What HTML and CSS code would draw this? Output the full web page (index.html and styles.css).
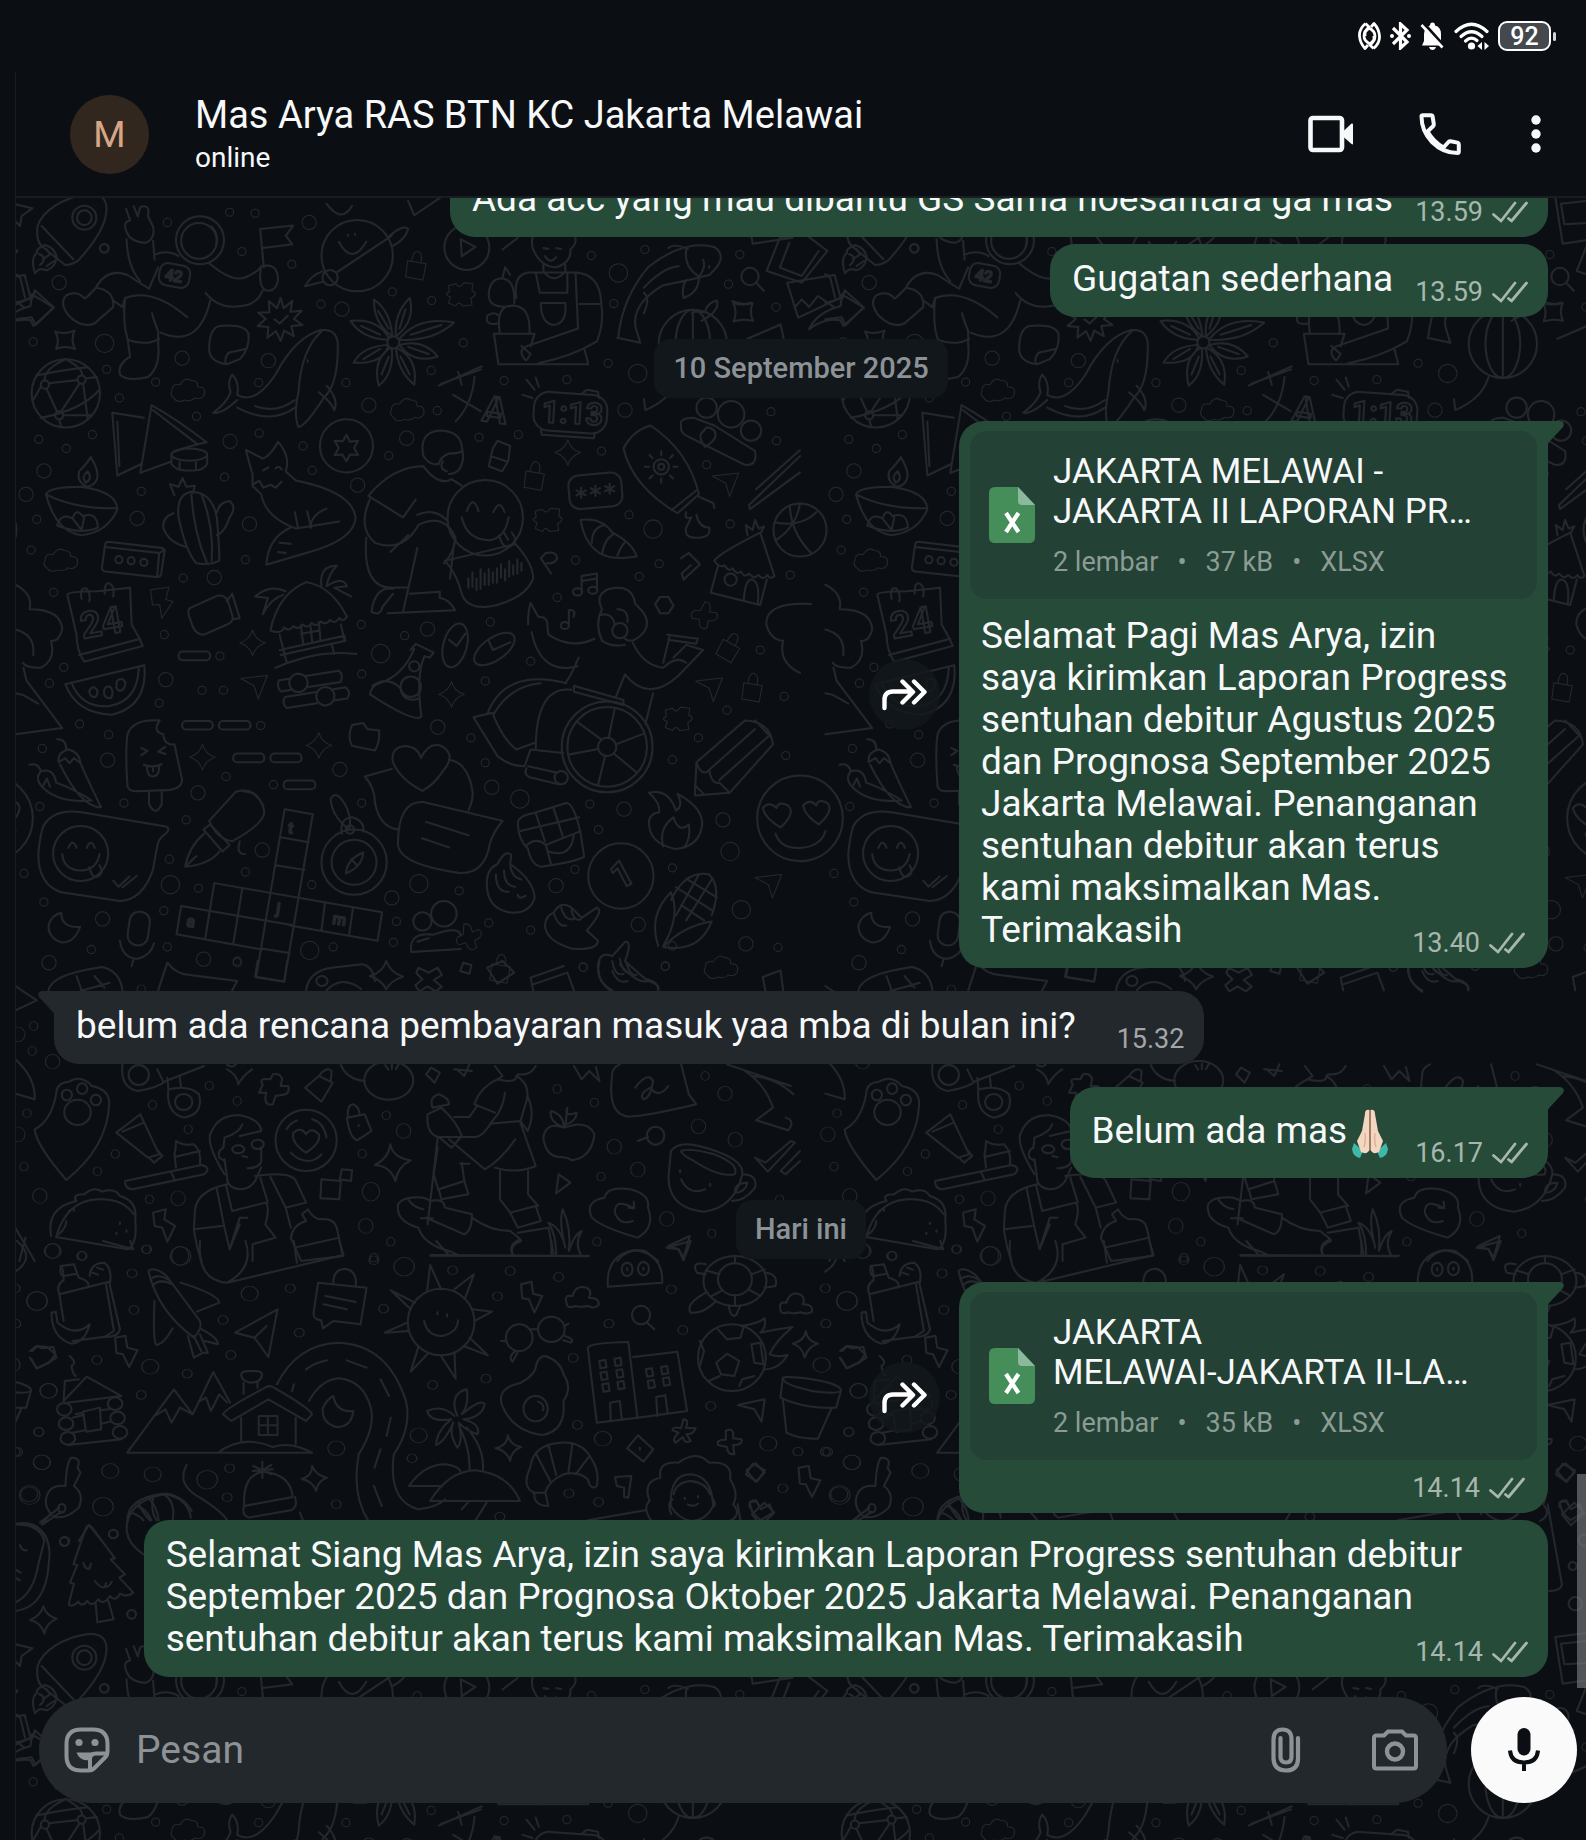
FILE: index.html
```html
<!DOCTYPE html>
<html lang="id">
<head>
<meta charset="utf-8">
<meta name="viewport" content="width=device-width, initial-scale=1">
<title>Mas Arya RAS BTN KC Jakarta Melawai</title>
<link rel="stylesheet" href="styles.css">
</head>
<body>
<svg class="sprite" aria-hidden="true">
  <defs>
    <symbol id="ticks" viewBox="0 0 36 22"><path d="M1.500 13.500 9 20 23 2M16.500 17.500 19.500 20 34.500 2" fill="none" stroke="currentColor" stroke-width="2.800" stroke-linecap="round" stroke-linejoin="round"/></symbol>
    <symbol id="tail" viewBox="0 0 16 23"><path d="M0 0H12Q17.500 1 15 6L3 19Q0 22 0 23Z" fill="currentColor"/></symbol>
    <symbol id="sheet" viewBox="0 0 46 56"><path d="M6 0H29L46 18V50Q46 56 40 56H6Q0 56 0 50V6Q0 0 6 0Z" fill="#458d59"/><path d="M29 0 46 18H33Q29 18 29 14Z" fill="#8cb99c"/><path d="M17 26 29.500 45M29.500 26 17 45" fill="none" stroke="#fff" stroke-width="4.200"/></symbol>
    <symbol id="forward" viewBox="0 0 46 32"><path d="M2.500 29V21Q2.500 12.500 11 12.500H30M20.500 2.500 31 13 20.500 23.500M32 2.500 42.500 13 32 23.500" fill="none" stroke="currentColor" stroke-width="4.400" stroke-linecap="round" stroke-linejoin="round"/></symbol>
  </defs>
</svg>

<div class="statusbar">
  <svg width="23" height="28" viewBox="0 0 23 28"><g fill="none" stroke="currentColor" stroke-width="2.800" stroke-linejoin="round"><path d="M7.500 1.500Q1 7 1.500 14T7 26.500L10 23"/><path d="M7.500 1.500 11 5Q6 9 6 14T12 22L16 18V14"/><path d="M15.500 26.500Q22 21 21.500 14T16 1.500L13 5"/><path d="M15.500 26.500 12 23Q17 19 17 14T11 6L7 10V14"/></g></svg>
  <svg width="21" height="28" viewBox="0 0 21 28"><path d="M3 6 17 20 10.500 26V2L17 8 3 22" fill="none" stroke="currentColor" stroke-width="3.200"/><circle cx="2" cy="14" r="2" fill="currentColor"/><circle cx="19" cy="14" r="2" fill="currentColor"/></svg>
  <svg width="25" height="28" viewBox="0 0 25 28"><path d="M2 23.500 4 19V12Q4.500 5 10 3.500 10 .5 12.500 .5T15 3.500Q21 5 21 12V19L23 23.500ZM9 25H16Q15 28 12.500 28T9 25Z" fill="currentColor"/><path d="M3.500 1 24 24" stroke="#0b0f13" stroke-width="3"/><path d="M1.500 3 22.500 25.500" stroke="currentColor" stroke-width="2.600"/></svg>
  <svg width="35" height="28" viewBox="0 0 35 28"><g fill="none" stroke="currentColor" stroke-width="3.200" stroke-linecap="round"><path d="M2 9.500Q17.500-5 33 9.500"/><path d="M7 14.500Q17.500 5 28 14.500"/><path d="M11.500 19Q17.500 13.500 23 18.500"/></g><circle cx="17.500" cy="24" r="3.600" fill="currentColor"/><path d="M28 20V28L23.500 24ZM30.500 20V28L35 24Z" fill="currentColor"/></svg>
  <span class="battery"><span class="battery-body">92</span><span class="battery-cap"></span></span>
</div>

<main class="app">
  <header class="topbar">
    <span class="avatar" aria-hidden="true">M</span>
    <div class="contact">
      <h1 class="contact-name">Mas Arya RAS BTN KC Jakarta Melawai</h1>
      <p class="contact-state">online</p>
    </div>
    <button class="icon-button" type="button" aria-label="Panggilan video"><svg width="46" height="38" viewBox="0 0 46 38"><rect x="2.500" y="3" width="31.500" height="32" rx="2.500" fill="none" stroke="currentColor" stroke-width="4.600"/><path d="M35 16.500 43.500 8.500Q45 8 45 9.500V28.500Q45 30 43.500 29L35 21.500Z" fill="currentColor"/></svg></button>
    <button class="icon-button" type="button" aria-label="Panggilan suara"><svg width="42" height="42" viewBox="0 0 42 42"><path d="M2.500 3.500Q2.500 2.200 4 2.200H12Q13.300 2.200 13.600 3.500L14.800 11Q15 12.300 14 13.300L8.500 18.500Q14.500 29 24.500 34.500L29.500 29Q30.500 28 31.800 28.300L38.500 29.600Q39.800 30 39.800 31.300V38.500Q39.800 40 38.300 40 24 40 13 29 2.500 18 2.500 3.500Z" fill="none" stroke="currentColor" stroke-width="4" stroke-linejoin="round"/></svg></button>
    <button class="icon-button" type="button" aria-label="Menu lainnya"><svg width="20" height="38" viewBox="-5 0 20 38"><g fill="currentColor"><circle cx="5" cy="5" r="4.700"/><circle cx="5" cy="19" r="4.700"/><circle cx="5" cy="33" r="4.700"/></g></svg></button>
  </header>

  <section class="chat" aria-label="Percakapan">
    <svg class="wallpaper" aria-hidden="true">
      <defs>
        <marker id="d1" class="mk" markerUnits="userSpaceOnUse" markerWidth="60" markerHeight="60" viewBox="-30 -30 60 60"><circle class="ink" r="8"/></marker>
        <marker id="d2" class="mk" markerUnits="userSpaceOnUse" markerWidth="60" markerHeight="60" viewBox="-30 -30 60 60"><circle class="ink" r="14"/></marker>
        <marker id="d3" class="mk" markerUnits="userSpaceOnUse" markerWidth="60" markerHeight="60" viewBox="-30 -30 60 60"><circle class="ink" r="18"/></marker>
        <marker id="e1" class="mk" markerUnits="userSpaceOnUse" markerWidth="80" markerHeight="80" viewBox="-40 -40 80 80"><ellipse class="ink" rx="8" ry="13"/></marker>
        <marker id="e2" class="mk" markerUnits="userSpaceOnUse" markerWidth="80" markerHeight="80" viewBox="-40 -40 80 80"><ellipse class="ink" rx="14" ry="22"/></marker>
        <marker id="e3" class="mk" markerUnits="userSpaceOnUse" markerWidth="80" markerHeight="80" viewBox="-40 -40 80 80"><ellipse class="ink" rx="17" ry="28"/></marker>
        <path id="cloud" d="M-30 0Q-30-15-14-12-5-28 8-20 22-20 20-8 38-8 33 8 28 18 15 14 8 22-5 18-20 25-25 15-35 8-30 0Z"/>
        <path id="spark" d="M0-25Q5-6 25 0 6 6 0 25-6 6-25 0-6-6 0-25Z"/>
        <path id="cross" d="M-9-24Q0-28 5-18L8-9 20-14Q30-8 22 2L12 8 16 20Q10 30 0 22L-5 12-18 16Q-28 10-20 0L-10-5Z"/>
        <path id="bolt" d="M-22-27 14-32 8-8 22-4 0 29-4 2-18 3Z"/>
        <path id="lock" d="M-16-8 20-2 14 30-20 24ZM-8-8Q-5-28 4-26 14-24 10-4"/>
        <path id="puzzle" d="M-26-14-12-18Q-4-6 4-20L22-18 20-4Q34 2 18 10L20 24 2 26Q-6 14-12 26L-26 20-22 8Q-36 4-24-2Z"/>
        <path id="dart" d="M-26-14 26-20 8 26 0 0Z"/>
        <g id="tile" class="ink">
          <g transform="translate(0 200) scale(.5102)">
            <circle cx="392" cy="77" r="47"/><circle cx="390" cy="78" r="35"/><path d="M415 50q14 15 9 35"/>
            <path d="M248 60Q240 40 255 38L247 15M262 10 270 30 275 12Q295 5 290 30L300 50Q305 75 285 82 255 80 248 60M248 75Q250 130 275 157M300 78 303 115M303 105Q330 95 350 108M410 122Q455 160 480 150 505 140 512 128M188 170Q210 130 250 145L292 172 310 130M188 170Q165 195 165 190 150 175 130 185 115 200 135 225 160 250 185 240L222 208Q225 175 188 170M512 128Q545 120 545 155 540 180 520 175 505 165 512 128M222 195 240 208 245 190Q300 170 367 228M245 190Q240 240 250 270L255 305Q230 320 235 340 250 355 290 345 315 325 310 280V255Q300 230 298 220M250 272Q285 285 312 270M315 258Q390 290 412 195M403 180Q430 215 480 205 505 200 515 175"/>
            <rect x="312" y="124" width="60" height="44" rx="16" transform="rotate(10 342 146)"/><text x="324" y="157" class="glyph-s" transform="rotate(10 342 146)">42</text>
            <path d="M517 130 510 55 575 48 560 68 573 85 515 92"/>
            <circle cx="700" cy="107" r="70"/><circle cx="647" cy="150" r="15"/><path d="M634 158 598 167Q610 145 632 138M762 70Q790 45 800 55 795 75 770 88M660 140 768 68M664 80Q690 128 718 80M682 66v2M696 64v2"/>
            <use href="#lock" x="815" y="125"/><circle cx="915" cy="91" r="44"/><path d="M903 75 932 90 905 108Z"/>
            <use href="#puzzle" x="905" y="180"/><use href="#puzzle" x="1075" y="622"/><use href="#puzzle" x="1330" y="1012"/>
            <path d="M30 232 62 228 70 243 105 208 68 175 64 190 30 200M108 256Q128 262 146 254 138 272 147 290 128 282 110 290 118 272 108 256M1437 200Q1456 206 1475 200 1468 218 1476 235 1456 230 1438 236 1446 218 1437 200"/>
            <path d="m550 190 6 20 17-14-4 21 22-2-15 16 17 12-22 2 5 20-19-11-7 20-9-19-17 13 2-21-21-2 16-14-15-12 22-1-1-22 16 14ZM538 232l10 8 16-15"/>
            <path d="M430 245Q480 240 487 260 490 290 470 310L445 320Q410 315 410 290 410 250 430 245M442 318Q440 295 460 295L480 290"/>
            <circle cx="771" cy="277" r="12"/><path d="M769 265Q732 240 733 193 765 215 769 265M776 265Q772 220 803 190 815 235 776 265M783 270Q820 225 890 238 850 275 783 272M783 282Q830 270 858 305 810 320 783 282M778 288Q820 310 812 360 780 335 776 288M768 289Q772 340 742 362 730 310 765 288M760 285Q750 320 693 317 710 285 760 282M760 272Q710 270 687 235 740 230 762 268M741 215 762 250M795 212 783 250M865 243 805 262M840 300 800 286M803 340 785 305M748 340 762 305M712 310 745 290M708 245 745 262"/>
            <path d="M418 415Q445 395 452 375 445 355 455 340 470 355 465 380 500 400 540 340 580 265 630 253 665 250 662 290 662 360 635 385 600 440 585 443 575 420 585 375 590 290 632 254M465 405Q530 440 578 405M418 415Q435 418 465 390M500 402Q540 418 578 390M625 375Q650 395 655 410 665 390 640 362M603 312v3"/>
            <circle cx="129" cy="377" r="67"/><circle cx="88" cy="360" r="8"/><circle cx="160" cy="350" r="8"/><circle cx="116" cy="420" r="8"/><path d="M72 342Q130 330 172 326M65 390 80 364M96 357 152 351M168 348 190 345M91 368 112 413M124 420 180 420M156 358 120 412M80 425Q160 410 195 370M129 310Q85 330 88 352M129 310Q165 330 160 342M163 358 172 428M116 428 120 443"/>
            <use href="#cloud" x="367" y="372"/><use href="#cloud" x="797" y="410"/><use href="#cloud" x="118" y="705"/><use href="#cloud" x="1412" y="1503"/>
            <path d="M282 425 220 415 230 538 278 515M230 432 234 520M275 533 297 400Q350 430 405 473 370 480 340 492M275 533 337 510M300 410 385 475M336 497V515Q345 530 371 528 400 530 406 515V497M352 512v12M384 512v12"/><ellipse cx="371" cy="497" rx="35" ry="12"/>
            <path d="M90 575Q95 560 160 560 230 570 230 605 210 650 160 655 110 650 90 575 150 605 230 602M170 560Q150 550 155 530 170 515 178 502 195 530 190 545 185 558 170 560M168 552Q158 540 172 530 182 545 168 552M112 636Q120 610 142 622 150 600 162 618 190 608 192 640 160 655 112 636M142 622 160 645 165 620"/>
            <path d="M385 710Q365 690 350 620 345 575 375 570 415 570 425 620 430 680 430 705 410 715 385 710M375 575Q380 650 405 708M395 575Q420 640 415 705M340 612Q318 620 320 640 330 670 365 678M425 610Q430 590 450 588 465 600 450 620 440 650 425 655M342 577 333 555 350 560 358 543 365 560 382 558 378 572"/>
            <path d="M212 668 318 680Q325 682 322 690L316 730Q315 738 306 737L206 726Q198 724 200 716L206 674Q207 668 212 668M206 678 312 690 308 736M312 690 322 684"/><circle cx="233" cy="703" r="7"/><circle cx="257" cy="705" r="7"/><circle cx="282" cy="708" r="7"/>
            <path d="M482 488 515 505Q530 500 545 472 570 500 560 530L580 548Q690 570 697 620 695 665 600 690L522 713Q525 660 570 640M482 488Q490 520 495 535L495 558 512 575Q520 620 580 642L665 628M497 555 508 548 516 562 530 556 540 562 552 550M516 528l10-6M540 524q6-6 12 2M578 610 584 640M602 608 610 640M640 603Q610 615 608 640M545 688 560 690M548 670 570 672"/>
            <circle cx="679" cy="480" r="52"/><path d="m679 458 7 14 16-2-8 14 8 14-16-1-7 13-8-13-15 1 8-14-8-14 16 1Z"/>
            <path d="M830 500Q820 455 860 450 900 450 905 480L908 500Q905 535 880 535M830 500Q842 520 860 515 865 500 880 495 900 495 905 490M868 510Q860 525 876 530M722 578Q770 520 830 520 860 560 885 545L905 558M722 578 790 620 815 585M725 585Q700 640 735 670 790 690 820 635 870 610 893 660 890 690 870 710M818 615Q850 600 875 625M718 660Q710 760 770 758L800 757M818 680 790 805M765 688 800 655M728 805Q735 755 770 760M728 805Q745 815 750 795L770 770M760 808 892 802Q880 780 862 778M803 770 862 766 862 778M890 670 882 740"/>
            <circle cx="951" cy="621" r="74"/><path d="M905 620Q915 665 960 665 990 660 997 620M915 608q12-35 23 0M967 610q12-28 22 0M978 655q8 28 22 22 18-8 3-27M988 650l8 14"/>
            <path d="M872 705Q960 685 1010 672 1045 710 1045 740 1030 780 960 795 915 800 905 770 895 730 872 705M918 740v18M926 728v28M934 740v22M942 722v38M950 730v22M958 722v30M966 728v20M974 720v28M982 712v26M990 722v22M998 706v30M1006 714v18M1014 702v28M1022 710v14"/>
            <use href="#lock" x="1047" y="537"/><use href="#lock" x="1430" y="872" transform="rotate(20 1430 872)"/><use href="#lock" x="1474" y="952"/><use href="#lock" x="980" y="1503"/>
            <use href="#spark" x="1113" y="493"/><use href="#spark" x="495" y="866"/><use href="#spark" x="397" y="1090"/><use href="#spark" x="625" y="1067"/><use href="#spark" x="885" y="967"/>
            <path d="M958 520 966 485 975 470 1000 480 996 510 984 530ZM962 500 992 510M865 358 943 330M860 362 944 324M898 335 905 360M930 345Q925 400 893 432M888 380 942 412M1032 350 1048 370M1050 346 1056 364M1024 380 1044 386"/><text x="948" y="434" class="glyph-l" transform="rotate(8 970 400)">A</text>
            <rect x="1046" y="377" width="144" height="76" rx="30" transform="rotate(4 1118 415)"/><path d="M1140 378 1150 370 1172 374 1174 386M1060 450 1062 458 1164 465 1166 455"/><text x="1062" y="436" class="glyph-m" transform="rotate(3 1118 415)">1:13</text>
            <path d="M1222 485Q1240 450 1275 440 1350 490 1370 575L1328 612Q1240 560 1222 485M1316 606 1364 568M1370 580 1398 592 1400 602M1345 610Q1340 625 1355 620L1345 640Q1340 660 1365 660 1395 660 1390 640 1370 640 1365 615"/><circle cx="1296" cy="521" r="15"/><circle cx="1296" cy="521" r="6"/><path d="M1296 498V490M1296 552V544M1320 521H1328M1264 521H1272M1313 504 1319 498M1313 538 1319 544M1279 504 1273 498M1279 538 1273 544"/>
            <circle cx="1385" cy="405" r="20"/><circle cx="1433" cy="418" r="26"/><circle cx="1472" cy="450" r="20"/><path d="M1335 440Q1330 425 1360 425L1400 440 1480 490Q1485 520 1460 517L1345 460Q1332 452 1335 440M1380 450Q1385 438 1400 450 1410 465 1382 482 1365 460 1380 450"/>
            <rect x="1115" y="535" width="104" height="66" rx="20" transform="rotate(-5 1167 568)"/><path d="M1139 562v20M1130 567l18 10M1148 567l-18 10M1167 558v20M1158 563l18 10M1176 563l-18 10M1195 554v20M1186 559l18 10M1204 559l-18 10"/>
            <use href="#dart" x="1422" y="553"/><use href="#dart" x="498" y="950"/><use href="#dart" x="1390" y="955"/><use href="#dart" x="1506" y="1340"/>
            <path d="M1138 625Q1180 620 1200 650 1240 670 1248 697 1200 705 1175 690 1145 670 1138 625M1160 670Q1160 640 1185 635M1180 692Q1185 660 1205 652M1210 695Q1215 680 1225 668M1568 488 1482 565M1568 532 1470 604 1468 596 1568 500"/>
            <path d="M1070 690 1060 700 1080 730M1070 690Q1090 685 1092 700 1088 712 1072 710M1350 690 1335 700M1350 690 1372 712 1340 742 1336 730 1354 714"/>
            <path d="M132 772Q132 765 190 765L255 758 258 830Q270 850 280 872L165 903Q150 880 150 850ZM155 890 275 858M160 780Q155 755 170 760 178 770 175 785M205 770Q205 745 215 750 225 755 222 775"/><text x="158" y="850" class="glyph-l" transform="rotate(-10 205 830)">24</text>
            <use href="#bolt" x="317" y="789"/><path d="M372 798 425 774Q440 770 447 785L456 815Q458 825 445 830L400 850Q385 850 378 835L370 812Q368 802 372 798M444 785 455 770 470 818 456 820"/>
            <path d="M530 842Q545 770 600 747 650 755 680 815q-8 12-15 2-8 14-18 4-8 12-18 3-8 12-18 3-8 12-18 3-8 12-18 3-8 12-18 3-5 14-27 6M548 850 562 905M668 830 675 860M548 880 675 852 677 862 550 890M590 832 594 868M608 830 612 864M625 825 628 860M590 848 627 842M630 755Q625 715 660 715 645 730 640 755M500 775Q530 750 560 765M500 775 525 778 515 810Q530 780 555 772M640 755Q672 735 680 755L655 758 688 775M540 915Q560 905 580 900 640 880 698 888M650 868 655 888"/>
            <rect x="350" y="883" width="62" height="17" rx="8"/><rect x="357" y="1019" width="60" height="17" rx="8"/><rect x="429" y="1019" width="62" height="17" rx="8"/><rect x="457" y="1083" width="61" height="17" rx="8"/><rect x="530" y="1083" width="61" height="17" rx="8"/><rect x="556" y="1136" width="62" height="17" rx="8"/>
            <g transform="rotate(-9 610 975)"><path d="M572 952H553Q546 940 553 930H574M608 952H672Q680 940 672 930H606M620 986H560Q550 975 560 964H622M656 986H680Q690 975 680 964H654"/><circle cx="590" cy="941" r="18"/><circle cx="638" cy="975" r="18"/></g>
            <path d="M128 947 283 910Q290 990 220 1007 150 1005 128 947M140 944Q160 995 215 990 270 980 272 915M175 960q8-14 16 0 0 14-8 12-8-2-8-12M204 966q-2-16 12-14 8 8 2 22-12 2-14-8M230 940q10-8 16 4-2 16-12 16-10-4-4-20"/>
            <path d="M250 1148Q245 1080 250 1045 260 1015 313 1018 298 1040 320 1045 322 1068 342 1065L357 1135Q355 1155 320 1155L265 1157Q250 1155 250 1145M292 1158V1182Q305 1208 317 1182V1155M277 1072l12 6-12 8M324 1070l-14 9 14 5M282 1105Q300 1112 317 1104M288 1108q0 20 12 20 12 0 12-22M300 1110v8"/>
            <path d="M58 1105Q75 1100 80 1118 65 1135 90 1155 120 1180 180 1175M80 1118Q105 1110 110 1140 140 1150 180 1175M115 1100Q112 1080 135 1075 155 1080 158 1102 165 1120 198 1188 160 1190 118 1105M115 1100 128 1092 136 1102 145 1092 158 1102M112 1055Q130 1055 130 1075M85 1145 92 1132 98 1148"/>
            <path d="M85 1225Q105 1190 160 1198L325 1226Q335 1230 325 1240 310 1250 308 1265L300 1310Q280 1370 235 1372L120 1355Q75 1340 75 1280 78 1245 85 1225M222 1332l10 12 22-20M240 1345l28-22"/><circle cx="158" cy="1279" r="54"/><path d="M122 1280Q125 1312 160 1312 190 1310 195 1280M134 1268q8-20 16 0M170 1268q8-20 16 0M175 1306q5 22 16 18 14-6 4-22"/>
            <path d="M410 1215 462 1158Q505 1145 518 1195 520 1220 455 1255 425 1250 410 1215M399 1232 412 1222 450 1262 436 1275ZM400 1240Q370 1265 363 1305 410 1300 430 1275M363 1305 385 1284M480 1158Q500 1155 516 1185M470 1255Q462 1280 480 1280"/>
            <path d="M558 1192 613 1202 557 1530 502 1521ZM420 1337 749 1394 740 1450 569 1420M355 1382 577 1420M355 1382 346 1437 513 1467M420 1337 402 1447M475 1347 457 1457M637 1375 630 1430M692 1384 684 1440M550 1247 605 1257M540 1302 597 1311M512 1465 568 1474"/><g class="glyph-s" transform="rotate(9 550 1400)"><text x="538" y="1238">t</text><text x="540" y="1398">j</text><text x="370" y="1450">a</text><text x="652" y="1400">m</text></g>
            <circle cx="694" cy="1296" r="64"/><circle cx="694" cy="1296" r="44"/><path d="M678 1318Q680 1290 712 1277 710 1305 678 1318M688 1290l12 12M670 1240Q665 1210 690 1208 715 1215 712 1236M684 1232Q650 1205 648 1172 660 1150 680 1190 690 1215 684 1232"/><circle cx="686" cy="1232" r="8"/>
            <path d="M825 1092Q840 1060 865 1068 895 1085 870 1115 850 1145 828 1156 785 1135 770 1100 765 1070 795 1068 820 1070 825 1092M768 1113 715 1128Q735 1150 735 1180 745 1230 783 1232M880 1095Q915 1100 925 1150 930 1170 918 1195M780 1260Q780 1175 830 1178L985 1215Q965 1240 960 1260 950 1320 900 1317 780 1300 780 1260M835 1217 918 1243M827 1249 880 1267"/>
            <path d="M690 1027 712 1023 720 1035 743 1038Q745 1060 735 1077L690 1068Q680 1050 690 1027M805 880 815 868 850 885 842 895 832 892Q815 930 826 1010 815 1025 725 967 728 950 745 945 790 930 812 878M730 950Q760 930 785 955 790 985 822 975"/><circle cx="805" cy="952" r="20"/><circle cx="812" cy="912" r="10"/>
            <ellipse cx="892" cy="871" rx="23" ry="44" transform="rotate(15 892 871)"/><ellipse cx="969" cy="878" rx="22" ry="46" transform="rotate(55 969 878)"/><path d="M880 860 895 872 912 848M958 862 966 880 1000 865"/>
            <path d="M1180 800Q1165 770 1195 760 1240 750 1245 790 1280 820 1262 845 1240 870 1225 858M1180 800Q1165 830 1180 862 1200 875 1225 870M1175 812Q1200 805 1205 830M1210 800Q1232 800 1230 825"/><circle cx="1215" cy="842" r="15"/>
            <path d="M1035 830Q1035 800 1040 788L1055 815Q1075 815 1073 835L1075 850Q1120 880 1165 858M1042 845Q1060 930 1132 912M1134 895Q1120 930 1108 945M1240 865Q1260 910 1300 915 1325 890 1345 905M1125 950 1222 978 1222 988 1125 962ZM1225 928 1207 972M1225 928Q1270 985 1330 930L1378 880 1345 870 1320 895M1308 850 1368 858 1364 868 1310 860M1312 855 1300 905M1280 965 1265 1025"/>
            <circle cx="1190" cy="1070" r="89"/><circle cx="1190" cy="1070" r="78"/><circle cx="1190" cy="1070" r="18"/><path d="M1178 1055 1130 1020M1193 1052 1205 994M1207 1065 1262 1044M1203 1083 1248 1120M1186 1088 1172 1145M1173 1074 1115 1085M955 1005Q990 915 1110 945M968 1005Q1000 950 1060 945M1050 1075Q1050 950 1120 958M928 1012 965 1003Q985 1055 1012 1075L1048 1062M928 1012 975 1088Q1000 1108 1028 1108L1040 1075 1103 1082M1032 1112Q1025 1125 1040 1130L1095 1143M1035 1108 1090 1120"/><circle cx="1100" cy="1130" r="13"/>
            <path d="M1140 765V735L1170 730V762M1140 745 1170 740M1115 830V802Q1130 800 1124 815"/><ellipse cx="1132" cy="766" rx="9" ry="7"/><ellipse cx="1162" cy="763" rx="9" ry="7"/><ellipse cx="1107" cy="832" rx="8" ry="7"/>
            <path d="M1284 790 1294 776H1310L1320 793 1310 808H1294Z"/><use href="#cross" x="1380" y="811" transform="rotate(25 1380 811)"/>
            <path d="M1400 705Q1410 690 1490 650L1518 735q-8 8-14-2-8 12-18 0-8 10-18-3-8 10-16-4-8 8-16-6-8 8-16-6-10 6-20-9M1407 716 1393 768 1490 792 1503 742M1458 782Q1460 740 1475 742 1490 748 1485 790M1465 655 1462 635 1475 645 1480 625 1487 642 1498 638 1490 652"/><circle cx="1432" cy="742" r="12"/>
            <circle cx="1568" cy="645" r="52"/><path d="M1520 630Q1570 640 1600 610M1548 597Q1550 650 1590 690M1520 665Q1560 640 1568 593"/>
            <path d="M30 752Q65 770 58 800 120 800 122 840 115 865 100 862 110 900 80 915 50 915 45 905M30 840Q70 850 65 890M46 915 52 940 122 1033 30 1045M30 965 45 968 75 985M1590 790Q1500 785 1502 830 1510 860 1535 862 1525 905 1568 925"/>
            <path d="M1362 1165 1365 1100 1460 1018Q1510 1020 1515 1065L1430 1160ZM1365 1100Q1375 1130 1390 1115 1395 1145 1410 1140 1420 1150 1430 1160M1390 1115 1480 1035M1410 1135 1505 1050M1480 1018 1512 1052M1362 1145 1380 1163"/>
            <path d="M1015 1220Q1015 1205 1045 1200L1110 1180Q1125 1180 1138 1240L1145 1285Q1130 1295 1060 1305 1040 1300 1035 1270 1015 1250 1015 1220M1050 1200 1068 1255M1085 1190 1103 1245M1020 1235 1135 1208M1030 1265Q1050 1245 1070 1262L1138 1235M1070 1262 1080 1300M1075 1275Q1120 1290 1125 1240"/>
            <path d="M1272 1160Q1310 1150 1325 1195 1340 1185 1328 1162 1380 1190 1376 1225 1370 1265 1325 1270 1270 1260 1272 1215 1275 1200 1292 1198 1295 1180 1272 1160M1300 1265Q1290 1230 1320 1208 1330 1240 1350 1222 1355 1250 1340 1268"/>
            <circle cx="1217" cy="1323" r="64"/><text x="1200" y="1346" class="glyph-l" transform="rotate(-28 1217 1323)">1</text>
            <path d="M955 1350Q950 1310 975 1300 990 1270 1002 1282L1000 1300Q1045 1330 1048 1365 1040 1395 1005 1395 960 1390 955 1350M972 1320q0 35 25 34M988 1312q0 30 22 32M1000 1305q5 22 22 25M1015 1360Q1015 1370 1030 1362"/>
            <path d="M1068 1420Q1070 1400 1085 1395 1100 1370 1120 1385L1140 1405 1170 1385Q1185 1390 1150 1430L1172 1450Q1170 1470 1120 1465 1070 1450 1068 1420M1085 1395q10 30 25 25M1100 1385q8 28 25 22M1120 1390q5 22 18 18M1172 1498Q1175 1470 1200 1480L1225 1452Q1240 1450 1225 1490L1265 1525Q1290 1530 1290 1545M1172 1498Q1170 1530 1200 1550M1200 1490q5 30 22 25M1215 1485q5 30 22 28M1228 1495q8 25 20 22"/>
            <path d="M1290 1460Q1270 1400 1315 1355 1335 1400 1300 1460M1315 1370Q1345 1310 1390 1320 1415 1345 1395 1400M1395 1412Q1340 1420 1300 1462 1370 1475 1395 1412M1325 1345 1395 1390M1345 1328 1405 1365M1370 1320 1325 1400M1395 1330 1345 1410M1335 1380 1380 1410"/>
            <circle cx="1568" cy="1210" r="84"/><path d="M1522 1190Q1525 1175 1545 1185 1560 1200 1530 1228 1500 1210 1495 1190 1508 1175 1522 1190M1600 1185Q1603 1170 1622 1180 1635 1195 1605 1222 1578 1205 1574 1185 1588 1170 1600 1185M1520 1240Q1530 1270 1568 1268 1610 1265 1618 1235"/>
            <circle cx="870" cy="1397" r="25"/><circle cx="828" cy="1412" r="18"/><path d="M806 1472Q800 1432 850 1438 900 1420 903 1440M806 1472 903 1466M818 1452 840 1445"/><use href="#cross" x="918" y="1442"/>
            <path d="M120 1395Q120 1425 157 1423 145 1455 120 1453 95 1445 95 1420 100 1400 120 1395M235 1450Q240 1485 270 1485 295 1480 302 1455M262 1485 258 1500"/><rect x="252" y="1393" width="40" height="66" rx="19" transform="rotate(8 272 1426)"/>
            <path d="M1045 95Q1060 130 1090 130 1120 120 1118 95 1130 85 1128 72M1045 95Q1040 80 1045 68M1065 125V138Q1085 165 1108 138V125M1065 92l10 2M1090 92l10 2M1068 108Q1078 125 1090 110M1012 190Q1005 145 1035 140H1130Q1175 145 1178 195 1185 240 1170 275 1120 305 1055 318M1030 312Q1010 290 1040 282L1133 250 1128 140M1050 140 1058 180H1112V140M1060 200H1108Q1112 240 1085 243 1060 240 1060 200M1136 202H1178M968 260H1048L1040 285M968 260 977 320H1153L1145 288M980 260Q970 205 1005 205 1040 205 1038 260M1008 205Q955 215 958 180 962 150 985 152 1010 155 1008 200M985 150 990 130 1000 145M975 240Q950 245 955 225 968 215 978 225M1022 284 1040 300 1032 312"/>
            <path d="M1212 265Q1220 190 1270 130 1340 75 1400 90 1430 110 1390 145 1330 160 1300 165 1240 200 1245 245L1255 278 1210 268M1310 92Q1320 82 1348 94M1345 95Q1340 130 1370 148 1385 130 1378 115M1370 148Q1370 180 1340 190 1335 170 1345 155M1262 170Q1300 130 1330 128M1262 180Q1275 190 1262 220M1390 128v3"/>
            <circle cx="1358" cy="280" r="67"/><ellipse cx="1358" cy="280" rx="34" ry="67"/><path d="M1358 213V347M1358 222Q1350 215 1382 218 1385 200 1405 195 1412 215 1375 235M1330 345 1325 358Q1310 390 1265 410L1262 388M1465 270 1530 242 1536 270"/>
            <circle cx="1470" cy="148" r="17"/><path d="M1482 160 1497 176M985 95 1015 72M640 5Q670 45 690 10M800 0 812 28 865 -8"/>
            <polyline class="m1" points="450,22 500,24 328,42 204,93 474,99 572,124 769,178 846,195 629,202 65,276 209,330 305,355 507,356 678,356 845,332 908,278 988,352 1111,350 1192,318 1203,201 1159,107 1264,95 1428,163 1450,105 1521,208 234,386 385,422 181,458 76,467 130,485 508,455 594,480 762,499 857,411 939,463 1016,458 1179,490 612,528 440,541 277,569 72,624 61,684 359,739 481,703 105,767 322,850 431,892 125,914 97,945 708,830 793,852 961,825 709,927 951,941 1040,902 1092,777 1128,704 1253,736 1292,711 1233,615 1431,633 1385,517 1511,413 1522,470 1549,733 1490,880 1537,971 1425,998 1369,1052 1318,1095 396,959 438,959 312,984 511,1028 536,1144 213,1046 156,1025 83,1073 443,1128 923,1052 951,1101 709,1180 243,1180 78,1187 365,1213 47,1318 332,1290 389,1347 86,1374 321,1391 481,1315 611,1340 900,1352 777,1412 771,1453 653,1462 958,1415 1040,1429 1127,1310 1173,1232 1156,1182 1318,1307 1318,1460 1143,1502 1304,1500 179,1467 328,1462 465,1490 1525,1463 1540,1087"/>
            <polyline class="m2" points="606,42 116,160 670,212 357,308 526,313 723,400 797,465 451,471 86,529 269,622 489,633 701,557 420,738 325,938 838,839 858,1031 666,1114 388,1160 211,1096 964,1149 1225,410 1223,1192 1417,1213 1090,1342 1251,1418 1462,1456 201,1407 96,1493 514,1272 399,1486 768,1366 51,575"/>
            <polyline class="m3" points="205,279 1212,141 1250,338 1280,643 746,887 1019,1172 821,1338 334,1340 607,1469 1453,1389 1431,1275"/>
          </g>
          <g transform="translate(440 190) scale(.7309 .3333)">
            <path d="M465 140 447 240 495 275 530 180 500 130ZM478 155 465 230 495 255 518 180M475 275 540 252 548 320 490 380ZM485 350 495 325 505 348 517 315 540 350M400 330Q415 345 425 335M505 415Q515 365 548 345L550 310 580 350 552 405 548 388Q525 380 505 415"/>
          </g>
          <g transform="translate(0 960) scale(.5102 .3333)">
            <path d="M95 88Q100 40 200 18 235 30 240 88M150 45 160 88M185 45 205 80M158 90 215 65M310 88 328 5Q345 40 372 42L465 60 455 88M505 0 500 48 557 62 563 0M600 88Q605 30 650 20L710 10Q730 15 735 60M640 88Q670 40 708 84"/><ellipse cx="631" cy="60" rx="11" ry="15"/>
            <path d="M757 0Q765 35 790 47 765 60 757 85 750 60 725 45 750 35 757 0M902 30 908 5 924 12 920 38ZM955 20 985 0 1008 35 975 68ZM1040 50 1105 15M1045 70 1112 35M1040 50 1045 88M1112 35 1125 88M1175 0Q1165 60 1200 88M1200 30q10 40 30 30M1215 10Q1250 70 1270 60 1295 70 1290 88M1495 48 1530 28 1535 88M1495 48 1500 88"/>
            <path d="m820 20 20 15 18-15 8 22-16 15 16 20-12 14-16-15-16 15-8-18 14-18-12-18Z"/>
            <path d="M30 75 72 118 30 148M30 295Q70 350 68 415L30 398"/>
            <path d="M130 657Q70 550 68 505 100 480 110 400 110 365 135 362 160 340 180 375 215 385 214 430 210 560 130 657"/><ellipse cx="152" cy="454" rx="26" ry="38"/><ellipse cx="131" cy="402" rx="10" ry="16"/><ellipse cx="161" cy="383" rx="10" ry="16"/><ellipse cx="188" cy="417" rx="10" ry="16"/>
            <ellipse cx="272" cy="342" rx="20" ry="30"/><ellipse cx="360" cy="423" rx="17" ry="24"/><path d="M240 310Q235 380 270 390 310 380 325 360L400 315M330 385Q370 370 390 400 400 460 360 470 325 455 330 385M352 345 355 380M328 350 330 385M308 325 320 362"/>
            <path d="M445 312Q460 325 465 300M494 325Q475 345 467 370 465 340 445 325M515 370Q505 350 530 355L535 340Q550 335 553 355L550 375 565 375Q570 400 552 402L540 405 535 430Q520 435 520 410L522 395 508 395Z"/>
            <path d="M598 380 625 345 652 365 630 422ZM625 345Q640 315 650 330L648 362M668 312Q680 355 715 360M755 312l6 14M768 308v16M782 308l-6 16M835 340 845 320 862 335 852 365ZM895 325 910 345 920 310M890 325 925 330"/><ellipse cx="762" cy="358" rx="48" ry="58"/>
            <path d="M228 515 275 460 312 580 290 590ZM240 512 282 485M292 590 302 605 318 585 310 570M345 620 342 580Q345 560 345 540 360 555 380 550 395 570 392 610M342 588 392 570M245 660 395 612Q415 620 400 640L260 685Q245 685 245 660M335 632 342 655"/>
            <path d="M440 640Q400 540 415 510 430 460 470 463 510 475 512 510L470 525M475 490Q470 515 440 530L438 560Q425 570 430 590L440 600M512 560 512 600Q510 620 485 622M512 620 500 660Q490 685 470 685 445 680 445 650L440 595M475 585l10 4M445 670Q385 690 382 750L380 805 435 795M380 805Q385 860 395 900M500 645Q570 630 580 660L600 725 560 740M425 685 440 800 450 865 470 770 485 770M443 672 455 750 520 725Q530 740 520 790L540 830 495 850 495 900M510 650 525 725M530 648 560 740 570 800M450 865 470 790"/><ellipse cx="467" cy="565" rx="12" ry="12"/><ellipse cx="505" cy="550" rx="12" ry="14"/>
            <path d="M570 830Q575 790 600 780L592 760 604 745Q610 765 625 775 655 770 660 800L672 885 590 900 570 830M578 860 665 830"/>
            <ellipse cx="600" cy="538" rx="60" ry="92"/><path d="M562 505Q565 490 582 478M612 475Q635 485 640 530M570 575Q585 600 605 600 620 598 630 580M600 520Q610 495 625 520 630 545 600 575 570 545 575 515 590 495 600 520"/>
            <path d="M680 470 715 460 728 510 700 538Q685 530 680 470M682 468Q680 430 693 430 705 440 705 462M703 492v3M765 550Q770 590 805 598 780 615 775 660 765 615 735 612 762 590 765 550M630 655 668 660 665 715 628 712ZM670 625 690 628 688 660 666 655Z"/>
            <path d="M970 315 985 345 975 355Q1000 365 1010 355L1015 340Q1040 345 1050 315M975 355Q940 380 930 430L970 455M1012 345Q1040 370 1032 420L1020 480 960 488M1034 405Q1050 460 1034 510L1020 480M990 395Q985 450 965 480 945 530 930 528H860Q835 520 838 460L865 440Q895 480 905 525M890 468H920L935 435M848 440Q840 410 860 400 880 410 880 430ZM858 530 838 790M825 772H848M880 535 950 625Q980 600 1010 535M1020 485 1050 615Q1010 640 970 620M862 530 885 560 905 525M858 560 850 640 860 690M905 605 910 660M902 608H920M860 685 910 660 918 700 865 715ZM980 630V715L1000 755M1035 630V700L1055 735M1000 755 1050 735 1060 780 1015 800Z"/>
            <path d="M780 730Q790 705 830 710L845 720Q870 710 872 740L925 760Q925 810 910 820L850 780 835 770M780 730Q775 780 820 800 830 850 880 870L895 880M845 882 1152 886M925 770Q960 810 1000 810L1020 835Q995 850 1005 880M1015 815 1075 800 1085 880M1090 880Q1090 820 1075 785 1100 800 1108 860 1095 780 1103 745 1120 800 1115 870 1125 820 1140 810 1125 850 1140 885M800 715Q810 740 830 745"/>
            <path d="M1105 500Q1070 480 1065 530 1070 590 1100 588 1115 590 1120 598 1160 590 1165 520 1155 485 1125 492L1105 500Q1105 460 1080 450 1075 480 1105 500M1108 495Q1110 470 1112 440 1105 470 1130 455 1130 480 1110 490"/>
            <path d="M1200 340Q1190 450 1225 465 1240 475 1365 430L1350 400 1335 310M1215 310Q1200 320 1200 340M1245 380Q1270 330 1280 360 1275 410 1262 415 1250 400 1275 380 1290 415 1310 375M1125 315 1140 355 1155 330 1175 360 1168 318M1425 310 1550 375M1460 330Q1500 370 1515 440L1482 478 1545 508Q1560 480 1540 470M1475 345Q1520 350 1555 400"/>
            <path d="M1315 570Q1330 540 1370 555 1460 590 1455 640 1440 740 1380 752 1300 740 1312 620ZM1335 570Q1350 560 1400 580 1450 610 1440 640 1410 650 1360 600 1335 580 1335 570M1455 640Q1485 640 1480 680 1460 720 1435 720M1440 695Q1440 665 1465 665 1460 695 1440 695M1335 655Q1350 705 1382 685M1333 628v6M1392 668v6M1480 590 1500 605 1550 540 1558 545 1505 632ZM1530 630 1568 570M1530 630 1540 640 1568 600"/>
            <path d="M1160 770Q1145 720 1185 710 1190 675 1235 685 1275 700 1270 740 1285 800 1250 830 1180 800 1160 770M1240 740Q1205 710 1205 755 1215 795 1240 780M1232 740 1243 742 1242 722M1095 640 1118 665 1090 697ZM1310 855 1352 825 1340 890 1330 865ZM1250 540 1270 528"/><ellipse cx="1285" cy="524" rx="17" ry="27"/>
            <path d="M100 825Q90 740 150 720 140 700 165 700 185 675 200 692 225 680 235 705 270 720 265 775 270 850 250 865L110 828Q130 720 190 715 240 710 262 760M115 820Q130 800 130 780M235 785v4M248 808v4M228 815v4M135 750v4M145 745v4M300 755 325 745 322 775 343 795 328 842 318 800 303 795ZM1210 900Q1230 860 1265 870L1290 900M30 800 68 900M38 900 50 830"/>
            <polyline class="m4" points="277,85 66,195 63,270 410,374 299,432 53,457 369,505 465,420 226,579 47,617 191,631 293,715 287,865 161,884 757,463 710,578 766,842 733,890 1092,384 1165,425 1178,647 1170,842 1382,345 1395,817 1143,18 1304,15 465,5 1528,715"/>
            <polyline class="m5" points="103,302 791,510 349,712 78,705 1421,398 1369,496 1204,557 1250,626 1441,536 1307,774 103,870 717,795 35,220 35,520"/>
            <polyline class="m6" points="727,692 353,884"/>
          </g>
          <g transform="translate(0 1240) scale(.6059 .3333)">
            <path d="M98 160 180 122 198 265Q195 290 170 288L120 300M98 160Q92 130 105 118 105 80 100 75L122 70 130 110Q150 120 145 140M98 160 105 240M175 130 188 270 172 288M148 105Q150 65 172 65 185 80 182 122M152 95l10 6M160 80l10 6M85 215Q85 290 118 308 140 305 148 250 125 290 95 245L92 212ZM100 75Q98 105 106 105L126 98"/>
            <path d="M245 90Q255 75 275 105L330 240Q335 260 320 290 260 210 245 90M248 115Q260 95 280 118M252 135Q262 110 285 130M298 125Q360 160 362 185L325 212M285 262Q270 310 258 312 252 300 255 180M330 262Q360 290 360 310L338 300M310 285 320 350 335 335 343 335 330 280M320 285 332 330M388 275 458 205 443 348 420 290 440 255M388 275 420 290"/>
            <path d="M525 125 605 140 595 250 550 240 533 262 530 238Q515 235 518 210ZM550 125Q550 85 570 83 590 90 587 135M537 165 587 183M534 190 572 205"/>
            <ellipse cx="728" cy="243" rx="55" ry="100"/><path d="M705 148 710 72 728 145M750 145 782 100 768 170M780 205 812 212 783 240M775 290 805 343 765 315M750 335 752 413 728 345M690 320 678 392 705 340M675 270 635 275 672 245M685 185 645 148 678 205M700 240Q705 285 730 285 755 275 756 238M722 214v6M738 220v6"/>
            <path d="M860 130 877 122 880 158 895 165 882 215 873 175 862 172ZM190 290 207 284 210 320 227 328 213 378 203 340 192 336ZM1318 680 1335 675 1338 712 1354 718 1340 768 1330 730 1320 728ZM935 185Q930 160 945 165 950 130 968 140 978 150 972 170 990 170 988 192 980 205 970 195 955 200 950 195 935 205 935 185M1288 205Q1285 180 1298 185 1303 150 1320 160 1330 170 1325 190 1343 190 1340 212 1332 222 1322 214 1308 220 1302 214 1288 222 1288 205"/>
            <path d="M1003 137Q1000 40 1048 27 1095 40 1093 125Z"/><ellipse cx="1035" cy="85" rx="9" ry="20"/><ellipse cx="1062" cy="83" rx="9" ry="20"/><path d="M1035 82v6M1062 80v6M1100 20 1140 0 1128 58 1120 25Z"/>
            <ellipse cx="857" cy="290" rx="22" ry="40"/><ellipse cx="910" cy="265" rx="22" ry="38"/><path d="M877 265H888M932 285Q950 295 942 305L930 298M850 330Q838 350 846 362L854 335M932 255 938 248M835 300 827 300"/><ellipse cx="1058" cy="222" rx="15" ry="28"/><path d="M1068 245 1080 265"/>
            <ellipse cx="1213" cy="120" rx="52" ry="75"/><ellipse cx="1213" cy="115" rx="28" ry="48"/><path d="M1213 45V67M1240 100 1262 85M1235 145 1255 165M1213 163V195M1192 148 1175 165M1187 100 1165 88M1165 70Q1140 60 1150 95L1165 100M1165 155Q1130 190 1140 215 1160 220 1182 180M1203 193Q1205 232 1215 222L1222 193M1264 95Q1285 100 1280 135L1262 140"/>
            <ellipse cx="1208" cy="350" rx="56" ry="100"/><path d="M1200 338 1220 360 1212 405 1190 400 1182 365ZM1222 255Q1250 250 1262 232 1265 260 1255 275 1280 265 1308 258 1280 300 1270 340 1285 350 1300 342 1285 385 1262 385M1185 265 1200 295 1222 290 1227 260M1155 300 1162 330 1155 375M1240 310 1255 305 1260 370 1245 365ZM1170 420 1188 405M1220 435 1225 415 1245 405"/>
            <path d="M970 320Q975 305 1037 303L1052 530 985 545ZM1045 348 1118 332 1134 510 1052 530M1008 538 1007 485 1023 480 1026 532M1085 525 1083 468 1098 463 1102 518M989 360l10-3 2 22-10 3ZM1014 353l10-3 2 22-10 3ZM991 395l10-3 2 22-10 3ZM1017 388l10-3 2 22-10 3ZM994 430l10-3 2 22-10 3ZM1019 423l10-3 2 22-10 3ZM1066 385l10-3 2 22-10 3ZM1091 378l10-3 2 22-10 3ZM1069 420l10-3 2 22-10 3ZM1094 412l10-3 2 22-10 3Z"/>
            <path d="M1292 410Q1300 405 1340 415 1390 430 1388 450 1380 460 1340 450 1290 430 1292 410L1288 470Q1330 505 1380 500L1388 450M1292 475 1298 575Q1320 595 1350 593L1372 503"/>
            <path d="M900 345Q925 360 930 400 945 440 930 480 935 570 895 582 845 570 828 490 820 440 860 425 885 400 885 370 890 345 900 345"/><ellipse cx="884" cy="503" rx="20" ry="38"/><path d="M888 482Q900 490 896 508"/>
            <path d="M457 430Q490 310 558 305 640 310 670 480 680 560 650 640 640 780 690 805 720 800 735 775M485 430 482 450M510 480Q530 415 560 412 600 420 612 500 620 560 592 640 580 760 608 840M505 385Q520 365 540 358M572 358 605 380M628 415 642 465M645 530 638 585M628 625 618 680M617 735 630 795M772 785 762 805M803 785 785 838"/>
            <path d="M515 635H210L287 445 318 520 352 393 380 485M255 525 273 505 283 545 297 500 318 520M330 480 340 470 348 510 362 460 375 485M368 520Q370 505 440 438 446 432 452 440 510 500 515 520L505 540 443 475 382 540ZM398 530V600M488 530V610M427 525H458V582H427ZM442 525V582M427 553H458M402 425V458M425 425V440M398 400Q400 388 415 390 435 388 432 405 430 425 413 425 398 420 398 400M360 635Q400 580 450 618 480 600 515 635M550 465Q555 515 583 510 580 560 555 558 530 545 533 500 540 475 550 465"/>
            <path d="M105 480 143 407 200 465 110 485M105 478 107 420 130 415M115 345Q128 365 118 375 120 400 125 405M120 530 138 522M120 575 140 568M125 520 137 515M165 508 180 505M168 548 182 542M137 512 165 500 167 565 142 572ZM112 612 200 595"/><ellipse cx="106" cy="505" rx="12" ry="19"/><ellipse cx="109" cy="548" rx="12" ry="19"/><ellipse cx="112" cy="592" rx="12" ry="19"/><ellipse cx="190" cy="488" rx="12" ry="19"/><ellipse cx="194" cy="531" rx="12" ry="19"/><ellipse cx="198" cy="574" rx="12" ry="19"/>
            <path d="M755 525Q740 460 770 445 775 490 762 520 795 470 800 490 795 530 765 535 795 550 788 580 770 570 757 545 765 600 755 620 740 580 748 545 735 600 720 612 720 570 745 535 710 545 705 510 730 490 750 525M760 565Q775 620 775 685M770 560Q800 620 797 688M710 780Q740 690 785 688 840 700 858 780ZM675 735Q700 670 735 670 755 675 760 690M675 735H730"/>
            <path d="M905 795Q880 795 882 755 860 740 875 680 880 610 925 605 960 600 975 650 990 690 985 735 975 750 970 715 955 690 930 700 905 720 900 755L905 795M885 640 908 720M905 612 918 702M945 606 938 695M973 645 950 700M880 755H900"/>
            <path d="M403 795Q400 700 435 692 480 700 483 768L403 795M487 768Q492 800 480 808L410 830Q398 820 403 795M433 662V712M418 675 448 700M448 672 420 702M417 690 450 685"/>
            <path d="M1075 840Q1060 800 1072 780 1060 720 1090 710 1085 660 1120 665 1150 625 1170 665 1210 660 1205 715 1220 760 1210 790 1225 820 1205 840M1107 795Q1105 700 1140 700 1175 705 1177 795 1165 838 1142 840 1120 835 1107 795M1112 760Q1115 725 1140 720 1165 725 1172 760M1110 775Q1100 790 1108 820M1175 770Q1185 790 1175 800M1130 770v4M1152 765v4M1135 790Q1145 800 1152 788"/>
            <path d="M1128 535Q1138 535 1132 560L1148 562Q1145 580 1133 580L1140 600Q1130 610 1127 588L1115 605Q1108 595 1120 575L1110 568Q1110 555 1124 562ZM1198 570Q1208 560 1210 575V592L1224 595Q1226 612 1210 612L1212 640Q1200 642 1200 618L1185 612Q1182 595 1198 596ZM1053 583 1078 625 1062 662 1035 622ZM1247 667 1262 695 1247 722 1232 688ZM1015 708 1042 705 1037 770 1030 768V740L1018 735ZM1056 620v6M1218 492 1262 475 1257 542 1245 505ZM1330 270Q1332 300 1350 308 1334 316 1328 350 1325 318 1308 308 1328 300 1330 270M838 583Q842 612 860 618 844 628 842 660 836 628 818 622 838 612 838 583M515 675Q522 705 540 710 524 720 522 750 516 720 498 714 516 704 515 675M1390 330 1398 315 1415 318 1428 340 1418 365 1398 382 1386 350M50 330 60 315 70 322 88 318 93 350 80 365 60 382 52 355M1237 785 1248 780 1256 805 1270 790 1276 815 1255 838 1242 815Z"/>
            <path d="M108 735Q110 660 118 650 135 650 128 680L133 695 122 735Q140 760 130 800 110 835 90 828 70 800 78 760 85 730 108 735M102 812 70 850M98 800 66 845M210 840Q210 770 270 758 310 770 315 830M225 795Q240 800 250 838M245 770Q260 800 262 838M270 760Q290 780 285 838M308 672Q290 730 330 770 365 810 375 838M500 838 495 815M970 838 1065 808M25 850Q70 845 78 900M130 900 147 852 168 900"/><ellipse cx="102" cy="802" rx="6" ry="13"/>
            <path d="M170 0 220 25 215 0M28 0Q60 50 25 92M330 0Q325 120 375 125 420 80 405 0M375 125 567 42 560 0M485 0 490 65M710 44H972M720 0 740 40M845 40Q842 10 860 0M910 0V44"/>
            <polyline class="m7" points="135,45 242,25 218,97 221,207 479,142 494,275 381,342 368,237 160,357 309,398 233,462 64,573 29,633 633,203 617,58 747,88 842,90 922,108 821,166 1005,248 1108,145 1127,267 946,351 802,413 714,432 1173,495 953,552 680,652 379,682 375,769 555,790 939,757 988,783 825,827 1292,742 1317,632 1362,632 1401,573 1363,248 1362,142 1472,45 187,880 107,900"/>
            <polyline class="m8" points="87,30 412,158 248,377 80,449 691,583 555,622 995,593 1268,608 1356,372 182,690 69,664 252,700 1406,664 1417,450 1385,760"/>
            <polyline class="m9" points="298,45 667,77 61,180 49,762 170,797 342,716 1398,180"/>
          </g>
          <g transform="translate(0 1480) scale(.3333)">
            <path d="M112 558C125 510 190 470 260 460 310 455 325 480 318 520 310 570 270 620 235 658M112 558Q108 600 125 615L195 672Q215 672 235 658M125 555 220 655"/><circle cx="253" cy="530" r="36"/><circle cx="253" cy="530" r="22"/>
            <path d="M112 635Q90 650 105 697 115 678 140 688 165 680 170 650 165 620 135 612 105 625 112 635M120 672Q145 650 118 640M128 655 150 640 140 625M140 675 162 660"/>
            <path d="M258 140 220 250 232 252 210 305 222 308 206 370Q215 380 235 362 245 380 262 360 275 380 295 355 310 375 330 345 345 365 360 338 380 350 400 335L358 290 375 280 332 235 345 232 275 138Q265 128 258 140M287 368 292 424 341 415 325 360M250 245q5 20 18 18l5-15M285 300q15 22 28 18 5-5 5-12M315 318q15-2 20-15"/>
            <path d="M45 130Q90 118 120 145 155 180 147 240 140 380 45 390M45 130Q120 130 133 180L115 250Q100 340 45 365M60 192Q65 210 80 208M45 265 62 275M45 290 60 298M125 130 150 100M130 376Q138 405 170 413 140 425 133 458 125 425 90 417 122 405 130 376M45 490 97 502 65 525 60 555 45 540M45 700Q60 705 62 715L75 770"/>
            <path d="M380 150Q375 60 500 38 550 45 575 90M380 150Q385 190 430 220M395 95Q420 105 430 118M415 65Q430 100 450 118M460 45Q450 90 470 118"/>
            <circle cx="340" cy="159" r="13"/><circle cx="193" cy="182" r="13"/><circle cx="395" cy="400" r="13"/><circle cx="313" cy="622" r="13"/>
          </g>
          <g transform="translate(376 1460) scale(.3333)">
            <path d="M1230 512 1108 528 1130 668 1250 650M1220 538 1125 548 1135 610 1220 605M1130 8 1167 28 1143 62 1110 40ZM1128 160 1165 125 1195 155 1155 193ZM1122 140Q1115 118 1140 118L1150 135M1085 130 1128 370Q1125 390 1090 390"/><circle cx="1160" cy="315" r="12"/><circle cx="1168" cy="428" r="20"/><circle cx="1195" cy="238" r="17"/>
          </g>
        </g>
        <pattern id="doodles" width="810" height="1440" patternUnits="userSpaceOnUse" patternTransform="translate(-16 -197)">
          <use href="#tile"/><use href="#tile" x="-810"/><use href="#tile" x="810"/><use href="#tile" y="-1440"/><use href="#tile" x="-810" y="-1440"/>
        </pattern>
      </defs>
      <rect width="100%" height="100%" fill="url(#doodles)"/>
    </svg>

    <div class="messages">
      <div class="row out">
        <div class="bubble inline"><p class="text">Ada acc yang mau dibantu GS Sama noesantara ga mas</p><span class="meta">13.59 <svg class="ticks"><use href="#ticks"/></svg></span></div>
      </div>
      <div class="row out">
        <div class="bubble inline"><p class="text">Gugatan sederhana</p><span class="meta">13.59 <svg class="ticks"><use href="#ticks"/></svg></span></div>
      </div>

      <div class="day">10 September 2025</div>

      <div class="row out first">
        <button class="forward" type="button" aria-label="Teruskan"><svg width="46" height="32"><use href="#forward"/></svg></button>
        <div class="bubble file-bubble tailed"><svg class="tail"><use href="#tail"/></svg>
          <a class="file" href="#"><svg class="file-icon"><use href="#sheet"/></svg>
            <span class="file-info"><span class="file-name">JAKARTA MELAWAI - <br>JAKARTA II LAPORAN PR…</span>
            <span class="file-meta"><span>2 lembar</span><span>•</span><span>37 kB</span><span>•</span><span>XLSX</span></span></span></a>
          <div class="caption"><p class="text">Selamat Pagi Mas Arya, izin<br>saya kirimkan Laporan Progress<br>sentuhan debitur Agustus 2025<br>dan Prognosa September 2025<br>Jakarta Melawai. Penanganan<br>sentuhan debitur akan terus<br>kami maksimalkan Mas.<br>Terimakasih</p></div>
          <span class="meta lifted">13.40 <svg class="ticks"><use href="#ticks"/></svg></span>
        </div>
      </div>

      <div class="row in first">
        <div class="bubble inline tailed"><svg class="tail"><use href="#tail"/></svg><p class="text">belum ada rencana pembayaran masuk yaa mba di bulan ini?</p><span class="meta">15.32</span></div>
      </div>

      <div class="row out first">
        <div class="bubble inline tailed tall"><svg class="tail"><use href="#tail"/></svg><p class="text">Belum ada mas<svg class="emoji" role="img" aria-label="🙏🏻" viewBox="0 0 38 50"><path d="M3 34 12 42 9 49Q2 48 1 40ZM35 34 26 42 29 49Q36 48 37 40Z" fill="#3fb8a8"/><path d="M18.500 1Q14 0 14 5L11 22 6 32 10 43Q16 46 18.500 41ZM19.500 1Q24 0 24 5L27 22 32 32 28 43Q22 46 19.500 41Z" fill="#f3d7c3"/><path d="M14 24Q15 32 13 38M24 24Q23 32 25 38" fill="none" stroke="#d9ab90" stroke-width="1.200"/><path d="M19 1V41" stroke="#a9775c" stroke-width="1.400"/></svg></p><span class="meta">16.17 <svg class="ticks"><use href="#ticks"/></svg></span></div>
      </div>

      <div class="day">Hari ini</div>

      <div class="row out first">
        <button class="forward" type="button" aria-label="Teruskan"><svg width="46" height="32"><use href="#forward"/></svg></button>
        <div class="bubble file-bubble tailed"><svg class="tail"><use href="#tail"/></svg>
          <a class="file" href="#"><svg class="file-icon"><use href="#sheet"/></svg>
            <span class="file-info"><span class="file-name">JAKARTA<br>MELAWAI-JAKARTA II-LA…</span>
            <span class="file-meta"><span>2 lembar</span><span>•</span><span>35 kB</span><span>•</span><span>XLSX</span></span></span></a>
          <span class="meta">14.14 <svg class="ticks"><use href="#ticks"/></svg></span>
        </div>
      </div>

      <div class="row out">
        <div class="bubble long"><p class="text">Selamat Siang Mas Arya, izin saya kirimkan Laporan Progress sentuhan debitur<br>September 2025 dan Prognosa Oktober 2025 Jakarta Melawai. Penanganan<br>sentuhan debitur akan terus kami maksimalkan Mas. Terimakasih</p><span class="meta lifted">14.14 <svg class="ticks"><use href="#ticks"/></svg></span></div>
      </div>
    </div>

    <form class="composer">
      <div class="field">
        <button class="icon-button" type="button" aria-label="Stiker"><svg width="46" height="46" viewBox="0 0 46 46"><path d="M17 2.500H29Q43.500 2.500 43.500 17V25Q43.500 28 41.500 30L30 41.500Q28 43.500 25 43.500H17Q2.500 43.500 2.500 29V17Q2.500 2.500 17 2.500Z" fill="none" stroke="currentColor" stroke-width="4"/><path d="M26 43V32Q26 26.500 32 26.500H43" fill="none" stroke="currentColor" stroke-width="4"/><path d="M12.500 25.500H32Q26 27 25 33 16 34.500 12.500 25.500Z" fill="currentColor"/><circle cx="15" cy="15.500" r="3.600" fill="currentColor"/><circle cx="31" cy="15.500" r="3.600" fill="currentColor"/></svg></button>
        <input class="input" type="text" placeholder="Pesan" aria-label="Pesan">
        <button class="icon-button clip" type="button" aria-label="Lampirkan"><svg width="30" height="46" viewBox="0 0 30 46"><path d="M27 11V31.500Q27 43.500 15 43.500T2.500 31.500V13Q2.500 2.500 11.500 2.500T20.500 12V30Q20.500 35.500 15 35.500T9.500 30V11" fill="none" stroke="currentColor" stroke-width="4.200" stroke-linecap="round"/></svg></button>
        <button class="icon-button camera" type="button" aria-label="Kamera"><svg width="46" height="42" viewBox="0 0 46 42"><path d="M4.500 6.500H12L16 2.500H30L34 6.500H41.500Q44 6.500 44 9V37Q44 39.500 41.500 39.500H4.500Q2 39.500 2 37V9Q2 6.500 4.500 6.500Z" fill="none" stroke="currentColor" stroke-width="4"/><circle cx="23" cy="22.500" r="8" fill="none" stroke="currentColor" stroke-width="4.400"/></svg></button>
      </div>
      <button class="mic" type="button" aria-label="Rekam pesan suara"><svg width="32" height="44" viewBox="0 0 32 44"><rect x="9.500" y="0" width="13" height="27.500" rx="6.500" fill="currentColor"/><path d="M2 22.500Q3 34.500 16 34.500T30 22.500M16 35V43" fill="none" stroke="currentColor" stroke-width="4"/></svg></button>
    </form>
    <span class="scrollbar" aria-hidden="true"></span>
  </section>
</main>
</body>
</html>
```
FILE: styles.css
```css
* {
  box-sizing: border-box;
}

:root {
  --bg: #0b0f13;
  --panel: #23282c;
  --out: #264b39;
  --file: #234135;
  --line: #191d21;
  --ink: #24282c;
  --text: #f7f8fa;
  --muted: #8d9296;
}

body {
  margin: 0;
  height: 100vh;
  display: flex;
  flex-direction: column;
  background: var(--bg);
  color: var(--text);
  font-family: Roboto, "Noto Sans", sans-serif;
}

h1,
p {
  margin: 0;
  font-weight: 400;
}

button {
  padding: 0;
  border: 0;
  background: none;
  color: inherit;
  font: inherit;
  cursor: pointer;
}

svg {
  display: block;
  flex: none;
}

.sprite {
  display: none;
}

/* Status bar */
.statusbar {
  flex: none;
  height: 72px;
  padding: 0 30px 0 0;
  display: flex;
  align-items: center;
  justify-content: flex-end;
  gap: 9px;
  color: #fff;
}

.battery {
  display: flex;
  align-items: center;
  gap: 2px;
}

.battery-body {
  width: 53px;
  height: 30px;
  border: 2px solid #fff;
  border-radius: 9px;
  background: #45494d;
  font-size: 25px;
  font-weight: 500;
  line-height: 27px;
  text-align: center;
}

.battery-cap {
  width: 3px;
  height: 9px;
  border-radius: 2px;
  background: #d5d6d7;
}

/* Header */
.app {
  flex: 1;
  min-height: 0;
  margin-left: 15px;
  border-left: 1px solid var(--line);
  display: flex;
  flex-direction: column;
}

.topbar {
  flex: none;
  height: 126px;
  padding: 0 40px 0 54px;
  border-bottom: 2px solid var(--line);
  display: flex;
  align-items: center;
  gap: 65px;
}

.avatar {
  flex: none;
  width: 79px;
  height: 79px;
  border-radius: 50%;
  background: #32271f;
  color: #d6a687;
  font-size: 37px;
  line-height: 80px;
  text-align: center;
}

.contact {
  flex: 1;
  min-width: 0;
  margin-left: -19px;
}

.contact-name {
  font-size: 38px;
  line-height: 48px;
}

.contact-state {
  font-size: 28px;
  line-height: 38px;
}

/* Conversation */
.chat {
  position: relative;
  flex: 1;
  min-height: 0;
  display: flex;
  flex-direction: column;
}

.wallpaper {
  position: absolute;
  inset: 0;
  width: 100%;
  height: 100%;
}

.ink {
  fill: none;
  stroke: var(--ink);
  stroke-width: 2px;
  stroke-linecap: round;
  stroke-linejoin: round;
}

.ink *,
.mk .ink {
  vector-effect: non-scaling-stroke;
}

.mk {
  overflow: visible;
}

.glyph-s,
.glyph-m,
.glyph-l {
  font-family: Roboto, sans-serif;
}

.glyph-s {
  font-size: 30px;
}

.glyph-m {
  font-size: 60px;
  font-weight: 700;
}

.glyph-l {
  font-size: 72px;
  font-weight: 700;
}

.ink polyline {
  stroke: none;
}

.m1 { marker: url(#d1); }
.m2 { marker: url(#d2); }
.m3 { marker: url(#d3); }
.m4,
.m7 { marker: url(#e1); }
.m5,
.m8 { marker: url(#e2); }
.m6,
.m9 { marker: url(#e3); }

.messages {
  position: relative;
  flex: 1;
  min-height: 0;
  padding: 0 38px;
  overflow: hidden;
  display: flex;
  flex-direction: column;
  justify-content: flex-end;
  gap: 7px;
}

.row {
  flex: none;
  display: flex;
  align-items: center;
  gap: 19px;
}

.row.first {
  margin-top: 16px;
}

.row.out {
  justify-content: flex-end;
}

.bubble {
  position: relative;
  border-radius: 25px;
  color: var(--text);
}

.out .bubble {
  background: var(--out);
}

.in .bubble {
  background: var(--panel);
}

.out .tailed {
  border-top-right-radius: 0;
}

.in .tailed {
  border-top-left-radius: 0;
}

.tail {
  position: absolute;
  top: 0;
  left: 100%;
  width: 16px;
  height: 23px;
  color: var(--out);
}

.in .tail {
  left: auto;
  right: 100%;
  color: var(--panel);
  transform: scaleX(-1);
}

.text {
  font-size: 37px;
  line-height: 42px;
}

.inline {
  display: flex;
  align-items: flex-end;
  gap: 22px;
  padding: 14px 20px 10px 22px;
}

.inline .text {
  padding-bottom: 7px;
}

.in .inline {
  gap: 41px;
}

.inline.tall {
  padding-top: 23px;
}

.inline.tall .text {
  padding-bottom: 16px;
}

.meta {
  display: flex;
  align-items: center;
  justify-content: flex-end;
  gap: 9px;
  color: #a7b7ae;
  font-size: 27px;
  line-height: 30px;
}

.in .meta {
  color: #a3a6a8;
}

.ticks {
  width: 36px;
  height: 22px;
}

.emoji {
  display: inline-block;
  width: 38px;
  height: 50px;
  margin: -12px 4px;
  vertical-align: -4px;
}

.long {
  width: 94%;
  padding: 14px 20px 10px 22px;
}

.meta.lifted {
  margin-top: -23px;
}

.file-bubble {
  width: 589px;
  padding: 10px 11px;
}

.file-bubble .meta {
  padding-right: 12px;
}

.file-bubble .file + .meta {
  margin-top: 13px;
}

.file {
  height: 168px;
  padding: 0 19px;
  border-radius: 17px;
  background: var(--file);
  color: inherit;
  text-decoration: none;
  display: flex;
  align-items: center;
  gap: 18px;
}

.file-icon {
  width: 46px;
  height: 56px;
}

.file-info {
  display: flex;
  flex-direction: column;
  gap: 13px;
}

.file-name {
  font-size: 35px;
  line-height: 40px;
  white-space: nowrap;
}

.file-meta {
  display: flex;
  gap: 19px;
  color: #8b9c94;
  font-size: 27px;
  line-height: 34px;
}

.caption {
  padding: 16px 0 0 11px;
}

.day {
  flex: none;
  align-self: center;
  margin-top: 15px;
  padding: 0 19px;
  border-radius: 16px;
  background: #12171b;
  color: var(--muted);
  font-size: 29px;
  font-weight: 500;
  line-height: 59px;
}

.forward {
  width: 71px;
  height: 71px;
  border-radius: 50%;
  background: rgb(17 24 27 / 80%);
  color: #fff;
  display: flex;
  align-items: center;
  justify-content: center;
}

/* Composer */
.composer {
  position: relative;
  flex: none;
  padding: 20px 9px 37px 23px;
  display: flex;
  align-items: center;
  gap: 24px;
}

.field {
  flex: 1;
  min-width: 0;
  height: 106px;
  padding: 0 29px 0 25px;
  border-radius: 53px;
  background: var(--panel);
  color: var(--muted);
  display: flex;
  align-items: center;
  gap: 26px;
}

.input {
  flex: 1;
  min-width: 0;
  padding: 0;
  border: 0;
  outline: 0;
  background: none;
  color: var(--text);
  font: 39px/48px Roboto, "Noto Sans", sans-serif;
}

.input::placeholder {
  color: var(--muted);
  opacity: 1;
}

.camera {
  margin-left: 45px;
}

.mic {
  flex: none;
  width: 106px;
  height: 106px;
  border-radius: 50%;
  background: #fafafa;
  color: var(--bg);
  display: flex;
  align-items: center;
  justify-content: center;
}

.scrollbar {
  position: absolute;
  right: 0;
  bottom: 152px;
  width: 9px;
  height: 214px;
  background: rgb(120 123 126 / 65%);
}
```
